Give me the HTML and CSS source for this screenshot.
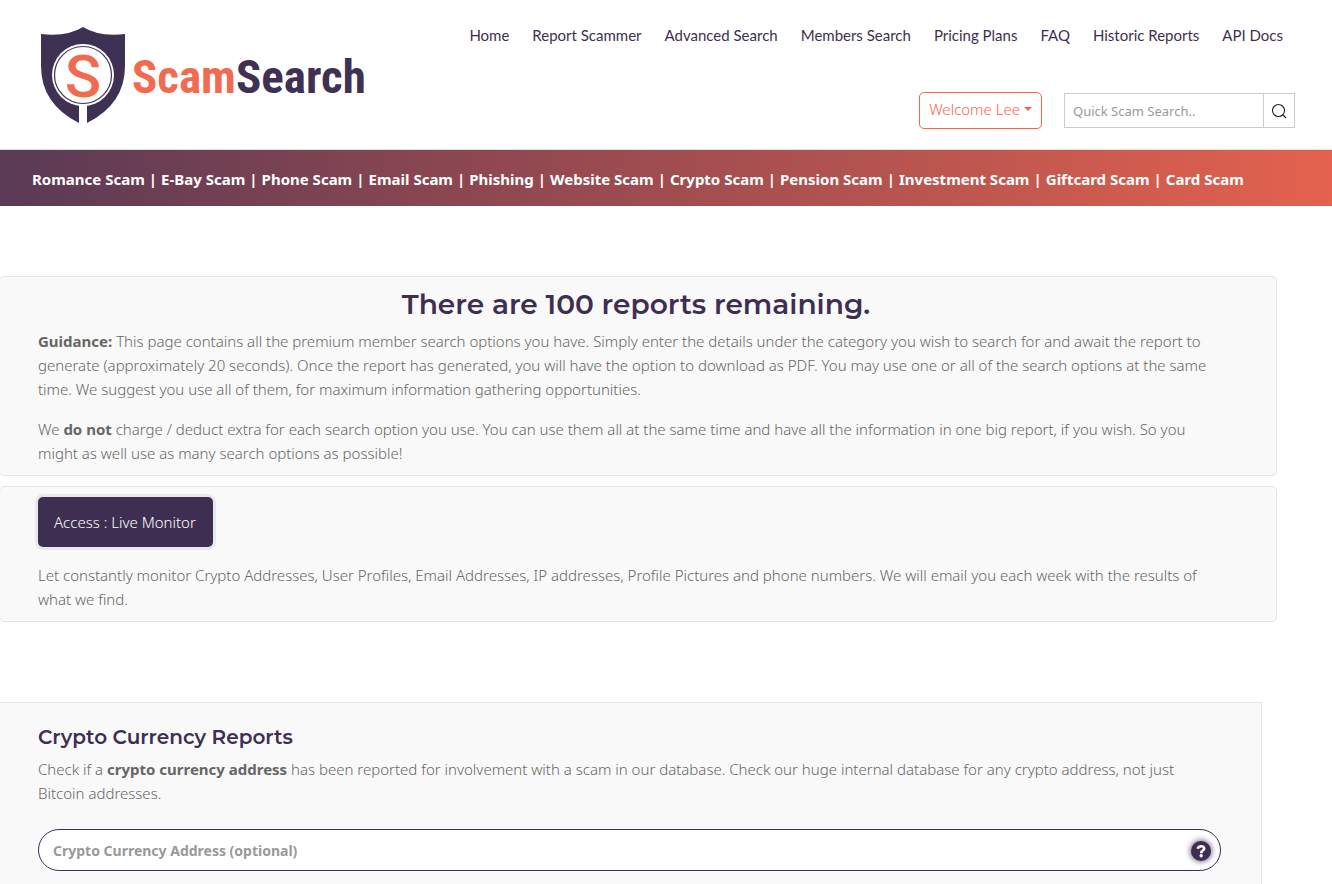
FILE: index.html
```html
<!DOCTYPE html>
<html lang="en">
<head>
  <meta charset="UTF-8" />
  <meta name="viewport" content="width=device-width, initial-scale=1" />
  <title>Members Search - ScamSearch</title>
  <link rel="stylesheet" href="styles.css">
</head>
<body>
  <header class="header">
    <a class="logo" href="#" aria-label="ScamSearch home">
      <svg class="logo-shield" viewBox="0 0 84 97" width="84" height="97" aria-hidden="true">
        <path fill="#3f3153" d="M0 7 Q26 10 42 0 Q58 10 84 7 V39 Q84 77 46 96 V78 H38 V96 Q0 77 0 39 Z" />
        <circle cx="42" cy="48" r="31" fill="#fff" />
        <circle cx="42" cy="48" r="28.5" fill="none" stroke="#3f3153" stroke-width="1.2" />
        <text x="42" y="70" class="logo-letter">S</text>
      </svg>
      <span class="logo-text"><span class="logo-accent">Scam</span>Search</span>
    </a>
    <div class="header-right">
      <nav class="nav" aria-label="Main">
        <a href="#">Home</a>
        <a href="#">Report Scammer</a>
        <a href="#">Advanced Search</a>
        <a href="#">Members Search</a>
        <a href="#">Pricing Plans</a>
        <a href="#">FAQ</a>
        <a href="#">Historic Reports</a>
        <a href="#">API Docs</a>
      </nav>
      <div class="tools">
        <button class="user-btn" type="button">Welcome Lee <span class="caret"></span></button>
        <form class="search">
          <input type="text" placeholder="Quick Scam Search.." aria-label="Quick scam search" />
          <button type="submit" aria-label="Search">
            <svg viewBox="0 0 16 16" width="16" height="16" fill="none" stroke="#222" stroke-width="1.1" aria-hidden="true">
              <circle cx="7.5" cy="7.5" r="6" />
              <path d="M12 12 L15 15" />
            </svg>
          </button>
        </form>
      </div>
    </div>
  </header>

  <nav class="categories" aria-label="Scam categories">
    <a href="#">Romance Scam</a><span>|</span>
    <a href="#">E-Bay Scam</a><span>|</span>
    <a href="#">Phone Scam</a><span>|</span>
    <a href="#">Email Scam</a><span>|</span>
    <a href="#">Phishing</a><span>|</span>
    <a href="#">Website Scam</a><span>|</span>
    <a href="#">Crypto Scam</a><span>|</span>
    <a href="#">Pension Scam</a><span>|</span>
    <a href="#">Investment Scam</a><span>|</span>
    <a href="#">Giftcard Scam</a><span>|</span>
    <a href="#">Card Scam</a>
  </nav>

  <main class="main">
    <section class="box">
      <h1>There are 100 reports remaining.</h1>
      <p><strong>Guidance:</strong> This page contains all the premium member search options you have. Simply enter the details under the category you wish to search for and await the report to generate (approximately 20 seconds). Once the report has generated, you will have the option to download as PDF. You may use one or all of the search options at the same time. We suggest you use all of them, for maximum information gathering opportunities.</p>
      <p>We <strong>do not</strong> charge / deduct extra for each search option you use. You can use them all at the same time and have all the information in one big report, if you wish. So you might as well use as many search options as possible!</p>
    </section>

    <section class="box">
      <button class="monitor-btn" type="button">Access : Live Monitor</button>
      <p>Let constantly monitor Crypto Addresses, User Profiles, Email Addresses, IP addresses, Profile Pictures and phone numbers. We will email you each week with the results of what we find.</p>
    </section>

    <section class="report">
      <h2>Crypto Currency Reports</h2>
      <p>Check if a <strong>crypto currency address</strong> has been reported for involvement with a scam in our database. Check our huge internal database for any crypto address, not just Bitcoin addresses.</p>
      <div class="field">
        <input type="text" placeholder="Crypto Currency Address (optional)" aria-label="Crypto currency address" />
        <button class="help" type="button" aria-label="Help">
          <svg viewBox="0 0 20 20" width="20" height="20" fill="none" stroke="#fff" stroke-width="2.6" aria-hidden="true">
            <path d="M6.8 7.8 C7.4 4.4 13.2 4.4 13.2 7.4 C13.2 9.4 10.2 9.2 10.2 12.2" />
            <circle cx="10.2" cy="14.8" r="1.7" fill="#fff" stroke="none" />
          </svg>
        </button>
      </div>
    </section>
  </main>
</body>
</html>
```
FILE: styles.css
```css
:root {
  --purple: #3e2f52;
  --orange: #ff6347;
  --text: #666;
  --line: #e6e6e6;
}
* {
  box-sizing: border-box;
}
body {
  display: flex;
  flex-direction: column;
  min-height: 100vh;
  margin: 0;
  background: #fff;
  color: var(--text);
  font-family: "Noto Sans", sans-serif;
  font-size: 15px;
  font-weight: 300;
  line-height: 24px;
}
a {
  color: inherit;
  text-decoration: none;
}
button,
input {
  font-family: inherit;
}
.header {
  display: flex;
  justify-content: space-between;
  height: 150px;
  padding: 23px 37px 0 41px;
  border-bottom: 1px solid #e0e0e0;
}
.logo {
  display: flex;
  align-items: center;
  gap: 7px;
  height: 104px;
  color: #3f3153;
}
.logo-letter {
  fill: #f26b50;
  font-family: Roboto, sans-serif;
  font-size: 60px;
  font-weight: 500;
  text-anchor: middle;
}
.logo-text {
  padding-top: 4px;
  font-family: "Liberation Sans Narrow", "Roboto Condensed", "Arial Narrow", sans-serif;
  font-size: 47px;
  font-weight: 700;
}
.logo-accent {
  color: #f26b50;
}
.header-right {
  display: flex;
  flex-direction: column;
  align-items: flex-end;
  gap: 45px;
}
.nav {
  display: flex;
  gap: 23px;
  padding-right: 12px;
  color: var(--purple);
  font-family: Lato, sans-serif;
  font-weight: 400;
}
.tools {
  display: flex;
  align-items: center;
  gap: 22px;
}
.user-btn {
  display: flex;
  align-items: center;
  gap: 4px;
  height: 37px;
  padding: 0 9px 3px;
  background: #fff;
  border: 1px solid var(--orange);
  border-radius: 5px;
  color: var(--orange);
  font-size: 15px;
  font-weight: 300;
}
.caret {
  border: 4px solid transparent;
  border-top-color: var(--orange);
  border-bottom: 0;
}
.search {
  display: flex;
  width: 231px;
  height: 35px;
  border: 1px solid #ccc;
}
.search input {
  flex: 1;
  min-width: 0;
  padding: 0 8px;
  border: 0;
  font-size: 13px;
  font-weight: 400;
}
.search input::placeholder {
  color: #999;
}
.search button {
  display: flex;
  align-items: center;
  justify-content: center;
  width: 31px;
  padding: 0;
  background: #fff;
  border: 0;
  border-left: 1px solid #ccc;
}
.categories {
  display: flex;
  align-items: center;
  gap: 4px;
  height: 56px;
  padding: 2px 32px 0;
  background: linear-gradient(to right, #5a3a55, #8a4651 33%, #b9554f 69%, #e4624e);
  color: #fff;
  font-weight: 700;
  white-space: nowrap;
}
.main {
  flex: 1;
  display: flex;
  flex-direction: column;
  gap: 10px;
  padding: 70px 55px 0 0;
}
.box,
.report {
  margin-left: -1px;
  padding: 10px 42px 10px 38px;
  background: #f9f9f9;
  border: 1px solid var(--line);
}
.box {
  border-radius: 5px;
}
.box p {
  padding-right: 8px;
}
h1,
h2 {
  margin: 0;
  color: var(--purple);
  font-family: Montserrat, sans-serif;
  font-weight: 600;
}
h1 {
  margin-bottom: 8px;
  font-size: 28px;
  line-height: 34px;
  text-align: center;
}
h2 {
  margin-bottom: 8px;
  font-size: 20px;
  line-height: 24px;
}
p {
  margin: 0;
}
p + p {
  margin-top: 16px;
}
strong {
  font-weight: 700;
}
.monitor-btn {
  display: block;
  height: 50px;
  margin-bottom: 16px;
  padding: 0 17px 0 16px;
  background: var(--purple);
  border: 0;
  border-radius: 5px;
  box-shadow: 0 0 0 3px #e9e9eb;
  color: #fff;
  font-size: 15px;
  font-weight: 300;
}
.report {
  flex: 1;
  margin-top: 70px;
  margin-right: 15px;
  padding: 22px 40px 12px 38px;
  border-bottom: 0;
}
.field {
  position: relative;
  margin-top: 24px;
}
.field input {
  display: block;
  width: 100%;
  height: 42px;
  padding: 0 48px 0 14px;
  background: #fff;
  border: 1px solid var(--purple);
  border-radius: 21px;
  font-size: 14px;
  font-weight: 700;
}
.field input::placeholder {
  color: #999;
}
.help {
  position: absolute;
  top: 12px;
  right: 10px;
  width: 20px;
  height: 20px;
  padding: 0;
  background: var(--purple);
  border: 0;
  border-radius: 50%;
  box-shadow: 0 0 6px var(--purple);
}
.help svg {
  display: block;
}
```
